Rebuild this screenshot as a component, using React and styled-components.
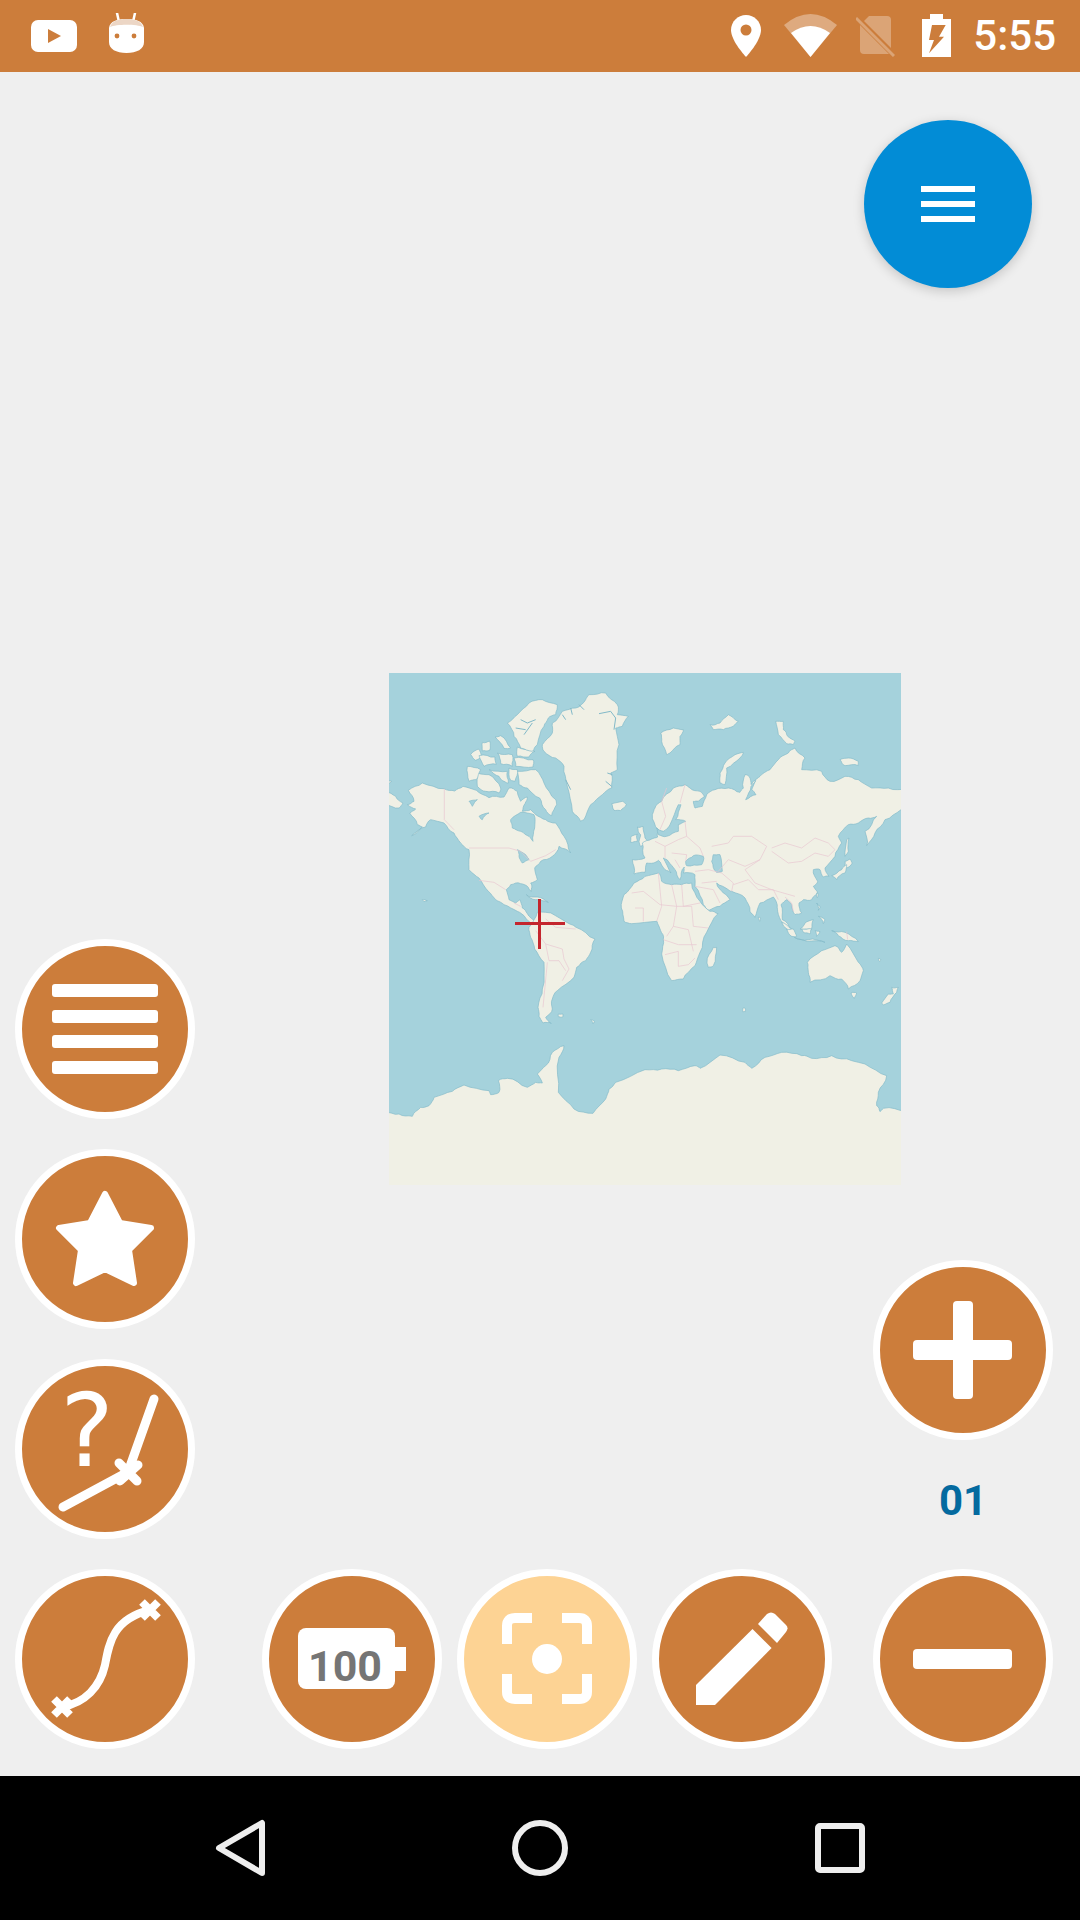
import React from 'react'
import styled, { createGlobalStyle } from 'styled-components'

const ORANGE = '#cc7d3b'
const WATER = '#a5d2dc'
const LAND = '#f0f0e5'
const COAST = '#82b9c8'
const BORDER = '#e8c6d0'

const GlobalStyle = createGlobalStyle`
  html, body {
    margin: 0;
    padding: 0;
    background: #efefef;
    font-family: Roboto, "Liberation Sans", sans-serif;
  }
`

const Screen = styled.div`
  width: 1080px;
  height: 1920px;
  display: flex;
  flex-direction: column;
  overflow: hidden;
  background: #efefef;
`

const StatusBar = styled.header`
  height: 72px;
  flex: none;
  display: flex;
  align-items: center;
  padding: 0 24px 0 31px;
  background: ${ORANGE};
`

const StatusIcon = styled.svg`
  flex: none;
  display: block;
  margin-left: ${(props) => props.$gap || 0}px;
`

const Clock = styled.span`
  margin-left: 22px;
  color: #fff;
  font-size: 42px;
  font-weight: 500;
  line-height: 72px;
`

const Spacer = styled.div`
  flex: 1;
`

const Main = styled.main`
  flex: 1;
  display: grid;
  grid-template-columns: 180px minmax(0, 1fr) 180px;
  padding: 0 27px 27px 15px;
`

const LeftColumn = styled.div`
  display: flex;
  flex-direction: column;
  justify-content: flex-end;
  gap: 30px;
`

const CenterColumn = styled.div`
  display: flex;
  flex-direction: column;
`

const RightColumn = styled.div`
  display: flex;
  flex-direction: column;
  align-items: center;
`

const MapFrame = styled.div`
  position: relative;
  width: 512px;
  height: 512px;
  margin: 601px 0 0 194px;
  background: ${WATER};
`

const MapImage = styled.svg`
  display: block;
  width: 512px;
  height: 512px;
`

const CrossH = styled.div`
  position: absolute;
  left: 126px;
  top: 249px;
  width: 50px;
  height: 3px;
  background: #c4262e;
`

const CrossV = styled.div`
  position: absolute;
  left: 149px;
  top: 226px;
  width: 3px;
  height: 50px;
  background: #c4262e;
`

const BottomRow = styled.div`
  margin-top: auto;
  display: flex;
  gap: 15px;
  padding-left: 67px;
`

const RoundButton = styled.button`
  width: 180px;
  height: 180px;
  flex: none;
  padding: 0;
  box-sizing: border-box;
  border: 7px solid #fff;
  border-radius: 50%;
  background: ${(props) => (props.$active ? '#fdd394' : ORANGE)};
  overflow: hidden;
`

const ButtonIcon = styled.svg`
  display: block;
  width: 166px;
  height: 166px;
`

const Fab = styled.button`
  align-self: flex-start;
  width: 168px;
  height: 168px;
  margin: 48px 0 0 -9px;
  padding: 0;
  border: 0;
  border-radius: 50%;
  background: #028cd6;
  box-shadow: 0 3px 12px rgba(0, 0, 0, 0.18);
  display: flex;
  flex-direction: column;
  align-items: center;
  justify-content: center;
  gap: 9px;
`

const FabLine = styled.span`
  width: 54px;
  height: 6px;
  background: #fff;
`

const ZoomLevel = styled.div`
  height: 122px;
  margin-bottom: 7px;
  color: #046a9f;
  font-size: 42px;
  font-weight: 700;
  line-height: 122px;
`

const NavBar = styled.nav`
  height: 144px;
  flex: none;
  display: grid;
  grid-template-columns: repeat(3, 300px);
  justify-items: center;
  align-items: center;
  padding: 0 90px;
  background: #000;
`

const NavIcon = styled.svg`
  display: block;
`

const ButtonGlyph = ({ children }) => (
  <ButtonIcon viewBox="7 7 166 166">{children}</ButtonIcon>
)

// breaks up the straight runs of a traced coast so it doesn't look like a polygon
const roughen = (points) => {
  let pts = points.split(' ').map((pair) => pair.split(',').map(Number))
  for (let pass = 0; pass < 2; pass++) {
    const next = []
    pts.forEach((p, i) => {
      const q = pts[(i + 1) % pts.length]
      const dx = q[0] - p[0]
      const dy = q[1] - p[1]
      const len = Math.hypot(dx, dy) || 1
      const noise = Math.sin((p[0] + 1) * 12.9898 + (p[1] + 1) * 78.233) * 43758.5453
      const offset = (noise - Math.floor(noise) - 0.5) * Math.min(len * 0.22, 7)
      next.push(p, [p[0] + dx / 2 - (dy / len) * offset, p[1] + dy / 2 + (dx / len) * offset])
    })
    pts = next
  }
  return pts.map((p) => `${p[0].toFixed(1)},${p[1].toFixed(1)}`).join(' ')
}

// coastlines traced on a 1536 unit grid, one group per quarter of the map
const northWest = [
  '58,352 100,330 165,347 197,354 222,340 262,352 300,374 345,372 360,345 385,355 395,385 415,372 408,392 400,415 425,410 440,425 470,440 500,450 525,490 545,540 510,520 490,550 455,565 437,585 445,620 425,630 427,655 415,640 395,632 365,635 352,650 360,680 380,690 392,680 400,705 415,722 440,745 430,760 410,735 385,715 345,695 320,680 298,655 270,615 240,590 240,530 215,510 195,480 165,450 125,440 110,462 68,488 100,462 85,455 62,420 80,408 55,395 75,385',
  '385,295 440,290 465,330 500,380 503,395 488,428 470,410 452,375 415,345 390,335',
  '265,300 300,305 335,345 330,360 290,355 265,340',
  '235,280 275,290 262,320 240,325',
  '300,290 355,295 358,330 345,325 330,310',
  '360,285 385,290 378,325 365,322',
  '245,245 268,228 278,250 260,262',
  '270,248 318,252 322,274 285,280',
  '325,240 370,245 370,280 335,272',
  '375,255 432,260 432,282 380,280',
  '385,222 438,235 420,252 385,250',
  '355,150 385,125 420,90 460,80 505,95 500,125 478,135 465,160 445,215 430,235 395,225 375,190',
  '318,192 335,188 365,225 345,226',
  '280,208 302,204 302,232 280,234',
  '600,65 650,60 685,95 685,125 718,130 700,160 680,165 690,215 685,290 665,300 668,345 640,365 605,395 585,440 575,445 550,415 535,340 525,280 500,255 465,235 460,215 490,180 490,150 520,115 560,105 590,80',
  '668,392 700,385 712,395 695,413 675,412',
  '-10,320 8,325 -10,334',
  '-10,358 20,370 42,390 30,405 -10,390',
  '412,665 445,672 478,688 440,680',
  '745,462 762,460 768,495 778,510 755,520 750,505 755,485',
  '727,490 745,483 745,505 725,508',
  '100,680 115,683 105,686',
]

const northWestWater = [
  '365,440 395,418 435,425 437,465 432,505 420,490 395,475 370,465',
  '385,530 410,545 420,560 400,570 390,550',
  '240,385 265,380 250,400',
  '270,430 300,420 280,440',
]

const northWestInlets = [
  'M395 140 L415 150 L440 140',
  'M405 185 L430 150',
  'M380 165 L410 170',
  'M630 122 L665 115 L680 135 L675 170',
  'M520 125 L530 140',
  'M545 105 L550 125',
  'M570 95 L585 110',
  'M650 325 L668 340',
  'M655 300 L670 305',
  'M530 320 L545 350',
]

const northWestBorders = [
  'M166 347 V440 L195 470',
  'M240 525 H360 L395 535 L425 565 L470 548 L500 530',
  'M270 622 L315 628 L350 650',
  'M375 690 L395 700',
]

const northEast = [
  '-8,510 20,498 38,492 40,470 22,425 30,405 50,385 85,345 120,335 135,345 165,355 178,372 160,385 145,385 150,405 172,400 185,365 210,350 250,345 285,358 295,345 300,305 312,310 318,335 325,325 345,310 375,290 400,260 430,240 450,225 480,255 470,290 530,295 555,325 600,310 640,320 680,345 730,345 785,350 785,400 768,410 720,440 690,480 665,518 660,475 695,430 670,435 640,450 610,455 580,490 590,510 570,550 540,585 552,610 535,612 525,590 505,590 518,625 505,640 518,660 500,680 475,680 462,690 470,720 450,725 440,695 425,680 408,695 412,740 440,768 415,750 398,715 395,690 385,672 345,690 330,733 315,715 300,675 260,655 250,650 215,630 235,660 255,680 225,700 192,712 175,695 150,640 150,605 115,600 118,582 105,620 90,590 70,565 55,555 78,600 60,590 40,562 25,570 5,570 0,598 -33,603 -38,560 0,555',
  '0,610 40,600 50,625 80,635 110,635 140,630 165,685 195,715 219,722 185,778 165,838 150,878 115,918 80,923 50,843 55,798 47,773 36,745 -40,752 -63,745 -71,705 -63,665 -33,630',
  '47,180 85,165 115,170 105,190 105,215 75,240 65,245 50,205',
  '195,155 225,150 250,125 280,145 265,160 235,170 205,170',
  '225,300 240,270 270,245 295,238 285,255 245,285 240,335 225,330',
  '392,145 415,145 415,170 428,190 450,205 445,215 425,212 400,185',
  '585,260 610,255 640,265 640,278 600,278',
  '605,500 612,495 610,535 600,550',
  '600,565 615,558 622,570 600,590',
  '560,608 590,590 605,575 600,600 575,620',
  '340,733 348,735 345,745',
  '515,660 520,662 517,674',
  '515,690 525,700 520,712',
  '520,730 540,740 535,752',
  '480,750 505,740 500,768 465,768',
  '410,748 440,768 445,785',
]

const northEastWater = [
  '35,465 55,475 75,455 100,395 108,395 92,440 122,445 100,455 100,475 65,490 40,485',
  '122,565 145,548 175,550 170,575 140,578 125,578',
  '205,545 225,545 232,595 215,598 200,565',
  '318,340 332,322 320,350 333,365 302,380',
]

const northEastBorders = [
  'M200 520 L250 510 L265 490 L320 490 L365 520 L345 560 L300 580 L250 560 L220 595',
  'M380 525 L420 510 L470 525 L510 495 L550 510 L570 530 L550 550 L510 540 L470 565 L430 570 L380 535',
  'M345 560 L300 590 L330 630 L380 650 L450 670',
  'M190 590 L230 600 L265 630 L260 655',
  'M265 635 L310 620 L340 650 L385 650 L400 680',
  'M420 672 L440 690 L445 715',
  'M65 345 L50 385 L62 430 L45 470',
  'M120 335 L105 390',
  'M120 445 L125 490 L165 525 L175 550',
  'M30 505 L60 520 L60 555',
  'M60 520 L100 500 L125 490',
  'M80 540 L125 545 L122 565',
  'M90 560 L105 585',
  'M150 595 L190 590',
  'M150 640 L205 650 L225 690',
  'M170 630 L215 625',
  'M-40 660 L-5 655 L45 695 L95 700 L140 700',
  'M40 600 L50 700 L35 745',
  'M80 635 L95 700',
  'M110 635 L115 700 L165 690',
  'M-30 705 L-5 705 L-5 745',
  'M95 700 L85 760 L65 790',
  'M140 700 L145 760 L190 765',
  'M85 760 L130 770 L145 835',
  'M55 800 L100 815 L155 815',
  'M60 845 L100 835 L100 880',
  'M100 880 L130 875 L150 855',
]

const southWest = [
  '618,30 605,70 590,95 563,115 555,145 505,185 490,210 490,240 470,265 487,283 462,282 450,262 447,235 460,180 465,100 437,60 425,25 420,-5 445,-50 470,-50 525,-25 561,-5',
  '508,255 522,255 522,263 508,263',
  '605,272 618,278 612,284',
]

const southWestBorders = [
  'M470 45 L520 60 L525 90 L540 120 L520 155',
  'M480 95 L510 95 L530 125',
  'M475 100 L462 235',
  'M440 5 L470 45 L480 95',
  'M470 -30 L500 -5 L560 0',
]

const southEast = [
  '186,100 205,55 215,55 205,110 190,115',
  '487,100 530,65 570,50 590,70 605,45 640,100 655,125 645,155 610,180 590,150 555,140 495,160 490,130',
  '618,192 635,192 628,208',
  '710,222 730,195 745,195 740,175 760,175 755,190 735,220 715,228',
  '448,25 490,32 540,40 500,36',
  '425,0 445,0 455,22 440,22',
  '470,0 500,0 495,15 475,10',
  '510,5 525,8 515,22',
  '560,5 600,10 640,38 610,35 580,20',
  '293,238 301,238 301,248 293,248',
  '700,88 708,92 704,98',
]

const southEastBorders = ['M605 8 L608 32']

const antarctica =
  '-12,1313 30,1323 70,1330 95,1303 120,1298 135,1273 190,1255 225,1236 300,1253 305,1265 330,1258 328,1223 355,1216 415,1243 440,1228 460,1230 445,1203 470,1178 490,1138 525,1118 510,1153 508,1258 555,1308 612,1321 650,1278 660,1248 680,1228 768,1190 818,1188 868,1193 918,1178 933,1186 993,1146 1068,1168 1088,1186 1128,1153 1178,1138 1238,1148 1268,1156 1328,1148 1388,1163 1428,1173 1493,1208 1468,1258 1463,1298 1473,1316 1483,1306 1550,1313 1550,1560 -12,1560'

const Shape = ({ points }) => <polygon points={roughen(points)} />

const WorldMap = () => (
  <MapImage viewBox="0 0 1536 1536">
    <g fill={LAND} stroke={COAST} strokeWidth="2" strokeLinejoin="round">
      {northWest.map((points) => <Shape key={points} points={points} />)}
      <g transform="translate(768 0)">
        {northEast.map((points) => <Shape key={points} points={points} />)}
      </g>
      <g transform="translate(0 768)">
        {southWest.map((points) => <Shape key={points} points={points} />)}
      </g>
      <g transform="translate(768 768)">
        {southEast.map((points) => <Shape key={points} points={points} />)}
      </g>
      <Shape points={antarctica} />
    </g>
    <g fill={WATER} stroke={COAST} strokeWidth="2" strokeLinejoin="round">
      {northWestWater.map((points) => <Shape key={points} points={points} />)}
      <g transform="translate(768 0)">
        {northEastWater.map((points) => <Shape key={points} points={points} />)}
      </g>
    </g>
    <g fill="none" stroke={COAST} strokeWidth="3">
      {northWestInlets.map((d) => <path key={d} d={d} />)}
    </g>
    <g fill="none" stroke={BORDER} strokeWidth="2">
      {northWestBorders.map((d) => <path key={d} d={d} />)}
      <g transform="translate(768 0)">
        {northEastBorders.map((d) => <path key={d} d={d} />)}
      </g>
      <g transform="translate(0 768)">
        {southWestBorders.map((d) => <path key={d} d={d} />)}
      </g>
      <g transform="translate(768 768)">
        {southEastBorders.map((d) => <path key={d} d={d} />)}
      </g>
    </g>
  </MapImage>
)

const App = () => (
  <Screen>
    <GlobalStyle />
    <StatusBar>
      <StatusIcon width="46" height="32" viewBox="0 0 46 32">
        <rect width="46" height="32" rx="7" fill="#fff" />
        <polygon points="17,9 30,16 17,23" fill={ORANGE} />
      </StatusIcon>
      <StatusIcon $gap={32} width="35" height="46" viewBox="0 0 35 46">
        <path d="M8 0 L10 9 M26 0 L24 9" stroke="#fff" strokeWidth="2.5" strokeLinecap="round" />
        <path d="M0 15 C1 8 8 6 17.5 6 C27 6 34 8 35 15 V29 C35 36 28 40 17.5 40 C7 40 0 36 0 29 Z" fill="#fff" />
        <path d="M1 14 C3 8 9 6 17.5 6 C26 6 32 8 34 14 C28 11 7 11 1 14 Z" fill="#ecd6c5" />
        <circle cx="8" cy="23" r="2.4" fill={ORANGE} />
        <circle cx="25" cy="23" r="2.4" fill={ORANGE} />
      </StatusIcon>
      <Spacer />
      <StatusIcon width="30" height="42" viewBox="0 0 30 42">
        <path d="M15 0 C6.7 0 0 6.7 0 15 C0 26 15 42 15 42 S30 26 30 15 C30 6.7 23.3 0 15 0 Z" fill="#fff" />
        <circle cx="15" cy="15" r="5.5" fill={ORANGE} />
      </StatusIcon>
      <StatusIcon $gap={23} width="53" height="44" viewBox="0 0 53 44">
        <path d="M26.5 43 L0 11 Q26.5 -11 53 11 Z" fill="#fff" opacity="0.35" />
        <path d="M26.5 43 L7 19 Q26.5 5 46 19 Z" fill="#fff" />
      </StatusIcon>
      <StatusIcon $gap={19} width="39" height="42" viewBox="0 0 39 42">
        <g fill="#fff" opacity="0.3">
          <path d="M13 1 H31 Q35 1 35 5 V33 L8 6 Z" />
          <path d="M4 10 L33 39 H8 Q4 39 4 35 Z" />
          <path d="M0 3 L38 41" stroke="#fff" strokeWidth="3" />
        </g>
      </StatusIcon>
      <StatusIcon $gap={27} width="29" height="44" viewBox="0 0 29 44">
        <path d="M8 0 H21 V5 H29 V43 H0 V5 H8 Z" fill="#fff" />
        <polygon points="10,11 23.7,11 17,22.7 22,22.7 7,39.3 12,26 7,26" fill={ORANGE} />
      </StatusIcon>
      <Clock>5:55</Clock>
    </StatusBar>

    <Main>
      <LeftColumn>
        <RoundButton>
          <ButtonGlyph>
            <rect x="37" y="45" width="106" height="13" rx="3" fill="#fff" />
            <rect x="37" y="71" width="106" height="13" rx="3" fill="#fff" />
            <rect x="37" y="96" width="106" height="13" rx="3" fill="#fff" />
            <rect x="37" y="122" width="106" height="13" rx="3" fill="#fff" />
          </ButtonGlyph>
        </RoundButton>
        <RoundButton>
          <ButtonGlyph>
            <polygon
              points="90,45 105,74 136,79 114,101 119,134 90,120 61,134 66,101 44,79 75,74"
              fill="#fff"
              stroke="#fff"
              strokeWidth="6"
              strokeLinejoin="round"
            />
          </ButtonGlyph>
        </RoundButton>
        <RoundButton>
          <ButtonGlyph>
            <text x="72" y="107" textAnchor="middle" fill="#fff" fontFamily="DejaVu Sans" fontSize="101">?</text>
            <path d="M48 148 L113 113 L139 40" fill="none" stroke="#fff" strokeWidth="9" strokeLinecap="round" strokeLinejoin="round" />
            <path d="M104 104 L122 122 M105 122 L123 106" stroke="#fff" strokeWidth="9" strokeLinecap="round" />
          </ButtonGlyph>
        </RoundButton>
        <RoundButton>
          <ButtonGlyph>
            <path d="M47 138 C70 134 85 118 90 96 C94 74 98 50 135 41" fill="none" stroke="#fff" strokeWidth="8" />
            <path d="M39 130 L55 146 M55 130 L39 146 M127 33 L143 49 M143 33 L127 49" stroke="#fff" strokeWidth="8" />
          </ButtonGlyph>
        </RoundButton>
      </LeftColumn>

      <CenterColumn>
        <MapFrame>
          <WorldMap />
          <CrossH />
          <CrossV />
        </MapFrame>
        <BottomRow>
          <RoundButton>
            <ButtonGlyph>
              <rect x="36" y="59" width="97" height="61" rx="8" fill="#fff" />
              <rect x="130" y="78" width="14" height="24" fill="#fff" />
              <text x="83" y="112" textAnchor="middle" fill="#757575" fontFamily="Roboto" fontWeight="700" fontSize="43">100</text>
            </ButtonGlyph>
          </RoundButton>
          <RoundButton $active>
            <ButtonGlyph>
              <path
                d="M50 75 V57 Q50 49 58 49 H75 M105 49 H122 Q130 49 130 57 V75 M130 105 V123 Q130 130 122 130 H105 M75 130 H58 Q50 130 50 123 V105"
                fill="none"
                stroke="#fff"
                strokeWidth="10"
              />
              <circle cx="90" cy="90" r="15" fill="#fff" />
            </ButtonGlyph>
          </RoundButton>
          <RoundButton>
            <ButtonGlyph>
              <polygon points="44,116 100.5,60 119.6,79 63,136 44,136" fill="#fff" />
              <path d="M106 55 L115 45 Q119 42 123 45 L134 56 Q137 59 134 63 L125 74 Z" fill="#fff" />
            </ButtonGlyph>
          </RoundButton>
        </BottomRow>
      </CenterColumn>

      <RightColumn>
        <Fab>
          <FabLine />
          <FabLine />
          <FabLine />
        </Fab>
        <Spacer />
        <RoundButton>
          <ButtonGlyph>
            <rect x="40" y="80" width="99" height="20" rx="4" fill="#fff" />
            <rect x="80" y="41" width="20" height="98" rx="4" fill="#fff" />
          </ButtonGlyph>
        </RoundButton>
        <ZoomLevel>01</ZoomLevel>
        <RoundButton>
          <ButtonGlyph>
            <rect x="40" y="80" width="99" height="20" rx="4" fill="#fff" />
          </ButtonGlyph>
        </RoundButton>
      </RightColumn>
    </Main>

    <NavBar>
      <NavIcon width="56" height="60" viewBox="0 0 56 60">
        <polygon points="7,30 50,5 50,55" fill="none" stroke="#eee" strokeWidth="6" strokeLinejoin="round" />
      </NavIcon>
      <NavIcon width="56" height="56" viewBox="0 0 56 56">
        <circle cx="28" cy="28" r="25" fill="none" stroke="#eee" strokeWidth="6" />
      </NavIcon>
      <NavIcon width="50" height="50" viewBox="0 0 50 50">
        <rect x="3" y="3" width="44" height="44" rx="2" fill="none" stroke="#eee" strokeWidth="6" />
      </NavIcon>
    </NavBar>
  </Screen>
)

export default App
